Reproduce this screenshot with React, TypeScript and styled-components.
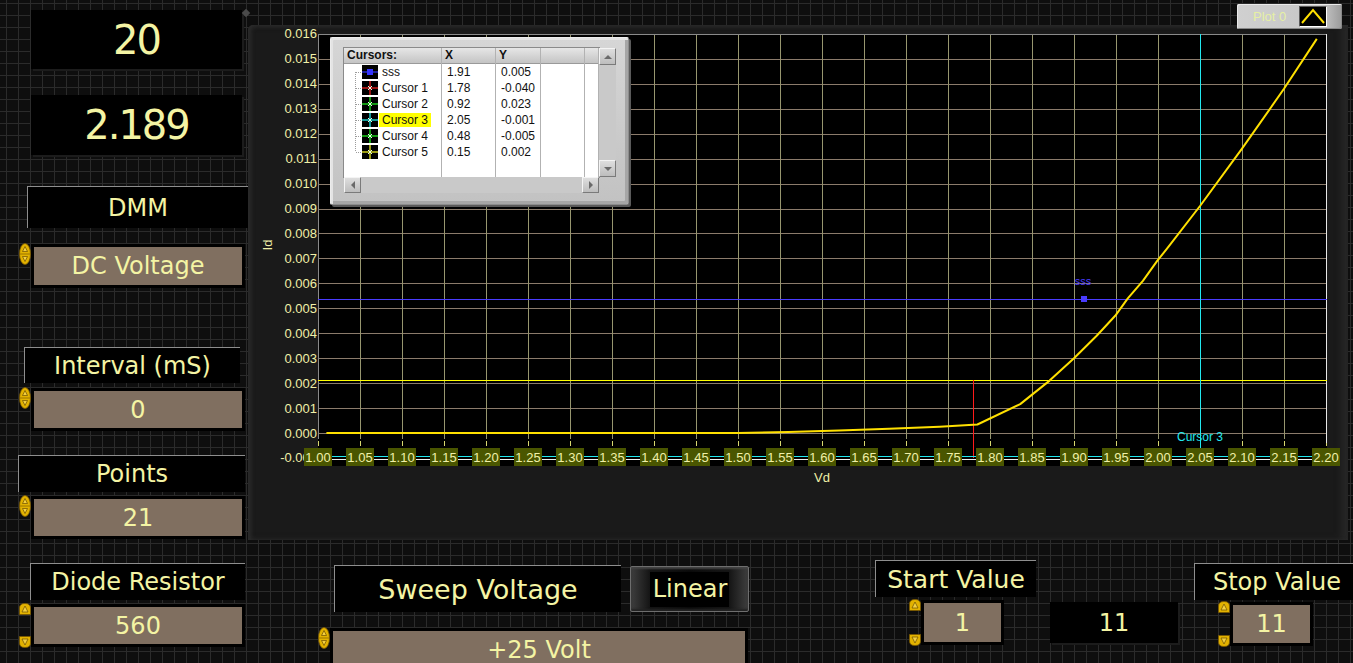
import React from 'react';
import styled, { createGlobalStyle } from 'styled-components';

const panelFont = `"Comic Sans MS", "DejaVu Sans", sans-serif`;
const uiFont = `"Liberation Sans", Arial, sans-serif`;
const ink = '#f4f4a4';

const GlobalStyle = createGlobalStyle`
  html, body { margin: 0; padding: 0; background: #0e0e0e; }
  #root { width: 1353px; height: 663px; }
`;

const FrontPanel = styled.div`
  width: 1353px;
  height: 663px;
  overflow: hidden;
  display: flex;
  background-color: #0e0e0e;
  background-image:
    linear-gradient(to right, #2b2b2b 1px, transparent 1px),
    linear-gradient(to bottom, #2b2b2b 1px, transparent 1px);
  background-size: 12px 12px;
  background-position: 6px 3px;
`;

const LeftColumn = styled.div`
  flex: none;
  width: 248px;
  display: flex;
  flex-direction: column;
  align-items: flex-start;
`;

const MainColumn = styled.div`
  flex: 1;
  min-width: 0;
  display: flex;
  flex-direction: column;
`;

type BoxProps = { $x?: number; $y?: number; $w: number; $h: number; $size?: number };

const Indicator = styled.div<BoxProps>`
  flex: none;
  margin: ${p => p.$y ?? 0}px 0 0 ${p => p.$x ?? 0}px;
  width: ${p => p.$w}px;
  height: ${p => p.$h}px;
  background: #000;
  box-shadow: 2px 2px 0 #1c1c1c;
  display: flex;
  align-items: center;
  justify-content: center;
  font-family: ${panelFont};
  font-size: ${p => p.$size ?? 24}px;
  letter-spacing: ${p => ((p.$size ?? 24) > 30 ? -2 : 0)}px;
  color: ${ink};
`;

const Caption = styled.div<BoxProps>`
  flex: none;
  box-sizing: border-box;
  margin: ${p => p.$y ?? 0}px 0 0 ${p => p.$x ?? 0}px;
  width: ${p => p.$w}px;
  height: ${p => p.$h}px;
  background: #000;
  border-top: 1px solid #8e8e8e;
  border-left: 1px solid #8e8e8e;
  display: flex;
  align-items: center;
  justify-content: center;
  white-space: nowrap;
  font-family: ${panelFont};
  font-size: ${p => p.$size ?? 24}px;
  color: ${ink};
`;

const ControlRow = styled.div<{ $x?: number; $y?: number }>`
  flex: none;
  margin: ${p => p.$y ?? 0}px 0 0 ${p => p.$x ?? 0}px;
  display: flex;
  align-items: flex-start;
  gap: 3px;
`;

const Field = styled.div<{ $w: number; $h: number }>`
  flex: none;
  width: ${p => p.$w}px;
  height: ${p => p.$h}px;
  background: #806f60;
  box-shadow: 0 0 0 3px #000;
  display: flex;
  align-items: center;
  justify-content: center;
  white-space: nowrap;
  font-family: ${panelFont};
  font-size: 24px;
  color: ${ink};
`;

const SpinnerSvg = styled.svg`
  flex: none;
  margin-top: -4px;
`;

function Spinner({ split, fieldHeight = 37 }: { split?: boolean; fieldHeight?: number }) {
  if (!split) {
    return (
      <SpinnerSvg width={12} height={22} viewBox="0 0 12 22">
        <ellipse cx={6} cy={11} rx={5.5} ry={10.5} fill="#e2b200" stroke="#7a5800" strokeWidth={0.8} />
        <line x1={1} y1={11} x2={11} y2={11} stroke="#8a6600" strokeWidth={0.8} />
        <path d="M6 3.5 L8.5 8.5 L3.5 8.5 Z" fill="#f3d040" stroke="#6b4e00" strokeWidth={0.7} />
        <path d="M6 18.5 L8.5 13.5 L3.5 13.5 Z" fill="#f3d040" stroke="#6b4e00" strokeWidth={0.7} />
      </SpinnerSvg>
    );
  }
  const h = fieldHeight + 8;
  return (
    <SpinnerSvg width={12} height={h} viewBox={`0 0 12 ${h}`}>
      <path d="M0.5 11.5 L0.5 5 Q0.5 0.5 6 0.5 Q11.5 0.5 11.5 5 L11.5 11.5 Z" fill="#e2b200" stroke="#7a5800" strokeWidth={0.8} />
      <path d="M6 3 L9 9 L3 9 Z" fill="#f3d040" stroke="#6b4e00" strokeWidth={0.7} />
      <path
        d={`M0.5 ${h - 11.5} L0.5 ${h - 5} Q0.5 ${h - 0.5} 6 ${h - 0.5} Q11.5 ${h - 0.5} 11.5 ${h - 5} L11.5 ${h - 11.5} Z`}
        fill="#e2b200"
        stroke="#7a5800"
        strokeWidth={0.8}
      />
      <path d={`M6 ${h - 3} L9 ${h - 9} L3 ${h - 9} Z`} fill="#f3d040" stroke="#6b4e00" strokeWidth={0.7} />
    </SpinnerSvg>
  );
}

/* ---------- chart ---------- */

const ChartPanel = styled.div`
  position: relative;
  flex: none;
  margin-top: 25px;
  width: 1100px;
  height: 515px;
  background: #1a1a1a;
  border-radius: 5px 0 0 0;
  box-shadow: inset 3px 1px 4px #2c2c2c, inset -7px 0 6px #262626;
`;

const Handle = styled.div`
  position: absolute;
  left: -5px;
  top: -15px;
  width: 6px;
  height: 6px;
  background: #4a4a4a;
  transform: rotate(45deg);
`;

const ChartSvg = styled.svg`
  display: block;
`;

const X0 = 70;
const X1 = 1079;
const Y0 = 9;
const px = (v: number) => X0 + (v - 1) * 840;
const py = (id: number) => 408 - id * 24940;
const crisp = (n: number) => Math.round(n) + 0.5;

const trace: [number, number][] = [
  [1.01, 0], [1.5, 0], [1.56, 0.00004], [1.62, 0.0001], [1.68, 0.00017], [1.74, 0.00025],
  [1.785, 0.00034], [1.836, 0.00116], [1.871, 0.0021], [1.9, 0.003], [1.927, 0.0039],
  [1.949, 0.0047], [1.964, 0.0054], [1.982, 0.0061], [1.999, 0.0069], [2.011, 0.0074],
  [2.05, 0.0091], [2.1, 0.0114], [2.15, 0.0138], [2.189, 0.0158],
];

const axisInk = '#f0f0a8';

function Chart() {
  const yTicks = Array.from({ length: 18 }, (_, i) => 16 - i);
  const xTicks = Array.from({ length: 25 }, (_, i) => i);
  return (
    <ChartSvg width={1100} height={515} viewBox="0 0 1100 515">
      <rect x={X0} y={Y0} width={X1 - X0} height={432} fill="#000" />
      {yTicks
        .filter(k => k >= 0 && k < 16)
        .map(k => (
          <line key={`h${k}`} x1={X0} x2={X1} y1={crisp(py(k / 1000))} y2={crisp(py(k / 1000))} stroke="#8b7b6b" />
        ))}
      {xTicks
        .filter(i => i > 0 && i < 24)
        .map(i => (
          <line key={`v${i}`} x1={crisp(px(1 + i * 0.05))} x2={crisp(px(1 + i * 0.05))} y1={Y0} y2={414} stroke="#97966f" />
        ))}
      {xTicks.map(i => (
        <line key={`t${i}`} x1={crisp(px(1 + i * 0.05))} x2={crisp(px(1 + i * 0.05))} y1={416} y2={421} stroke="#d8d870" />
      ))}
      <line x1={X0} x2={X1} y1={Y0 + 0.5} y2={Y0 + 0.5} stroke="#8a8a8a" />
      <line x1={X0 + 0.5} x2={X0 + 0.5} y1={Y0} y2={414} stroke="#8a8a8a" />
      <line x1={X1 - 0.5} x2={X1 - 0.5} y1={Y0} y2={418} stroke="#e8e8e8" />

      {/* cursors */}
      <line x1={X0} x2={X1} y1={355.5} y2={355.5} stroke="#ffff00" />
      <line x1={X0} x2={X1} y1={274.5} y2={274.5} stroke="#4a3cff" />
      <line x1={725.5} x2={725.5} y1={355} y2={433} stroke="#ff1a1a" />
      <line x1={952.5} x2={952.5} y1={Y0} y2={433} stroke="#22e8f0" />
      <rect x={833} y={271} width={6} height={6} fill="#4a3cff" />
      <text x={835} y={260} fill="#4a3cff" fontSize={11} fontFamily={uiFont} textAnchor="middle">sss</text>
      <text x={952} y={416} fill="#22e8f0" fontSize={12} fontFamily={uiFont} textAnchor="middle">Cursor 3</text>

      <polyline
        points={trace.map(([v, id]) => `${px(v).toFixed(1)},${py(id).toFixed(1)}`).join(' ')}
        fill="none"
        stroke="#ffe000"
        strokeWidth={2}
        strokeLinejoin="round"
      />

      <line x1={X0} x2={X1} y1={431.5} y2={431.5} stroke="#22e8f0" />
      <line x1={X0} x2={X1} y1={434.5} y2={434.5} stroke="#f0f0f0" />

      {yTicks.map(k => (
        <text
          key={`yl${k}`}
          x={69}
          y={py(k / 1000) + 4.5}
          fill={axisInk}
          fontSize={13}
          fontFamily={uiFont}
          textAnchor="end"
        >
          {(k / 1000).toFixed(3)}
        </text>
      ))}
      {xTicks.map(i => (
        <g key={`xl${i}`}>
          <rect x={px(1 + i * 0.05) - 14} y={423} width={28} height={18} fill="#4a5600" />
          <text x={px(1 + i * 0.05)} y={437} fill={axisInk} fontSize={13} fontFamily={uiFont} textAnchor="middle">
            {(1 + i * 0.05).toFixed(2)}
          </text>
        </g>
      ))}
      <text x={574} y={457} fill={axisInk} fontSize={13} fontFamily={uiFont} textAnchor="middle">Vd</text>
      <text
        x={20}
        y={224}
        transform="rotate(-90 20 220)"
        fill={axisInk}
        fontSize={13}
        fontFamily={uiFont}
        textAnchor="middle"
      >
        Id
      </text>
    </ChartSvg>
  );
}

/* ---------- cursor legend ---------- */

const CursorLegend = styled.div`
  position: absolute;
  left: 82px;
  top: 12px;
  width: 299px;
  height: 168px;
  box-sizing: border-box;
  padding: 10px 12px 10px 13px;
  background: linear-gradient(#d6d6d6, #c2c2c2);
  border: 1px solid #8c8c8c;
  border-top-color: #ececec;
  border-left-color: #ececec;
  border-radius: 2px;
  box-shadow: inset 2px 2px 0 #e4e4e4, inset -3px -3px 0 #a6a6a6, 2px 2px 0 #5a5a5a;
  display: grid;
  grid-template-columns: 255px 17px;
  grid-template-rows: 129px 16px;
  font-family: ${uiFont};
  font-size: 12px;
  color: #111;
`;

const TableArea = styled.div`
  display: flex;
  background: #fff;
  outline: 1px solid #8a8a8a;
  overflow: hidden;
`;

const Column = styled.div<{ $w?: number }>`
  box-sizing: border-box;
  width: ${p => (p.$w ? `${p.$w}px` : 'auto')};
  flex: ${p => (p.$w ? 'none' : 1)};
  border-right: 1px solid #b2b2b2;
  display: flex;
  flex-direction: column;
`;

const HeadCell = styled.div`
  height: 16px;
  box-sizing: border-box;
  padding-left: 3px;
  line-height: 15px;
  font-weight: bold;
  background: linear-gradient(#e6e6e6, #c4c4c4);
  border-bottom: 1px solid #9a9a9a;
  white-space: nowrap;
`;

const Cell = styled.div<{ $pad?: number }>`
  height: 16px;
  display: flex;
  align-items: center;
  padding-left: ${p => p.$pad ?? 5}px;
  white-space: nowrap;
`;

const NameTag = styled.span<{ $active?: boolean }>`
  margin-left: -1px;
  padding: 0 3px;
  line-height: 14px;
  background: ${p => (p.$active ? '#ffff00' : 'transparent')};
`;

const VScroll = styled.div`
  grid-column: 2;
  grid-row: 1;
  display: flex;
  flex-direction: column;
  justify-content: space-between;
  background: #c9c9c9;
`;

const HScroll = styled.div`
  grid-column: 1;
  grid-row: 2;
  display: flex;
  justify-content: space-between;
  background: #c9c9c9;
`;

const ScrollButton = styled.div<{ $h?: number }>`
  width: 17px;
  height: ${p => p.$h ?? 17}px;
  box-sizing: border-box;
  background: linear-gradient(#dedede, #bdbdbd);
  border: 1px solid;
  border-color: #f4f4f4 #7a7a7a #7a7a7a #f4f4f4;
  display: flex;
  align-items: center;
  justify-content: center;
`;

type Dir = 'up' | 'down' | 'left' | 'right';

const Arrow = styled.span<{ $dir: Dir }>`
  width: 0;
  height: 0;
  border: 4px solid transparent;
  ${p =>
    p.$dir === 'up'
      ? 'border-bottom-color: #6a6a6a; margin-top: -4px;'
      : p.$dir === 'down'
      ? 'border-top-color: #6a6a6a; margin-top: 4px;'
      : p.$dir === 'left'
      ? 'border-right-color: #6a6a6a; margin-left: -4px;'
      : 'border-left-color: #6a6a6a; margin-left: 4px;'}
`;

type CursorRow = { name: string; x: string; y: string; color: string; point?: boolean; active?: boolean };

const cursors: CursorRow[] = [
  { name: 'sss', x: '1.91', y: '0.005', color: '#3434ff', point: true },
  { name: 'Cursor 1', x: '1.78', y: '-0.040', color: '#ff2020' },
  { name: 'Cursor 2', x: '0.92', y: '0.023', color: '#22ff22' },
  { name: 'Cursor 3', x: '2.05', y: '-0.001', color: '#22ffff', active: true },
  { name: 'Cursor 4', x: '0.48', y: '-0.005', color: '#22ff22' },
  { name: 'Cursor 5', x: '0.15', y: '0.002', color: '#ffff22' },
];

function BranchIcon({ row, index, last }: { row: CursorRow; index: number; last: boolean }) {
  const top = index === 0 ? 8 : 0;
  const bottom = last ? 8 : 16;
  return (
    <svg width={36} height={16} viewBox="0 0 36 16" style={{ flex: 'none' }}>
      <line x1={11.5} x2={11.5} y1={top} y2={bottom} stroke="#9c9c9c" strokeDasharray="1 1" />
      <line x1={12} x2={18} y1={8.5} y2={8.5} stroke="#9c9c9c" strokeDasharray="1 1" />
      <rect x={18} y={1} width={16} height={14} fill="#000" />
      <line x1={18} x2={34} y1={8} y2={8} stroke={row.color} strokeWidth={1.2} />
      {row.point ? (
        <rect x={23} y={5} width={6} height={6} fill={row.color} />
      ) : (
        <>
          <line x1={26} x2={26} y1={1} y2={15} stroke={row.color} strokeWidth={1.2} />
          <path d="M24 6 L28 10 M28 6 L24 10" stroke="#e8ffe8" strokeWidth={1} />
        </>
      )}
    </svg>
  );
}

function Legend() {
  return (
    <CursorLegend>
      <TableArea>
        <Column $w={98}>
          <HeadCell>Cursors:</HeadCell>
          {cursors.map((c, i) => (
            <Cell key={c.name} $pad={0}>
              <BranchIcon row={c} index={i} last={i === cursors.length - 1} />
              <NameTag $active={c.active}>{c.name}</NameTag>
            </Cell>
          ))}
        </Column>
        <Column $w={54}>
          <HeadCell>X</HeadCell>
          {cursors.map(c => (
            <Cell key={c.name}>{c.x}</Cell>
          ))}
        </Column>
        <Column $w={45}>
          <HeadCell>Y</HeadCell>
          {cursors.map(c => (
            <Cell key={c.name}>{c.y}</Cell>
          ))}
        </Column>
        <Column $w={44}>
          <HeadCell />
        </Column>
        <Column>
          <HeadCell />
        </Column>
      </TableArea>
      <VScroll>
        <ScrollButton>
          <Arrow $dir="up" />
        </ScrollButton>
        <ScrollButton>
          <Arrow $dir="down" />
        </ScrollButton>
      </VScroll>
      <HScroll>
        <ScrollButton $h={16}>
          <Arrow $dir="left" />
        </ScrollButton>
        <ScrollButton $h={16}>
          <Arrow $dir="right" />
        </ScrollButton>
      </HScroll>
    </CursorLegend>
  );
}

const PlotLegend = styled.div`
  position: absolute;
  left: 989px;
  top: -21px;
  width: 105px;
  height: 25px;
  box-sizing: border-box;
  padding-left: 16px;
  display: flex;
  align-items: center;
  gap: 13px;
  background: linear-gradient(to right, #d0d0d0 0%, #c6c6c6 82%, #9a9a9a 100%);
  border-radius: 2px;
  box-shadow: inset 1px 1px 0 #eaeaea, inset -1px -1px 0 #888;
  font-family: ${uiFont};
  font-size: 13px;
  color: #e6f0a4;
`;

const Swatch = styled.div`
  width: 28px;
  height: 21px;
  box-sizing: border-box;
  background: #000;
  border: 1px solid;
  border-color: #5a5a5a #ffffff #ffffff #5a5a5a;
`;

/* ---------- bottom controls ---------- */

const BottomRow = styled.div`
  flex: none;
  display: flex;
  align-items: flex-start;
`;

const Group = styled.div<{ $x: number; $y: number }>`
  flex: none;
  margin: ${p => p.$y}px 0 0 ${p => p.$x}px;
  display: flex;
  flex-direction: column;
`;

const SweepTop = styled.div`
  display: flex;
  align-items: flex-start;
  gap: 9px;
  padding-left: 16px;
`;

const ModeButton = styled.div`
  flex: none;
  margin-top: 1px;
  width: 119px;
  height: 46px;
  box-sizing: border-box;
  border: 1px solid #6e6e6e;
  border-radius: 2px;
  background: linear-gradient(to right, #3e3e3e, #151515 16%, #0a0a0a 50%, #151515 84%, #3e3e3e);
  box-shadow: inset 0 2px 2px #454545, inset 0 -2px 2px #222;
  display: flex;
  align-items: center;
  justify-content: center;
`;

const ModeText = styled.span`
  background: #000;
  padding: 3px 2px 4px 3px;
  font-family: ${panelFont};
  font-size: 24px;
  color: ${ink};
`;

export default function App() {
  return (
    <>
      <GlobalStyle />
      <FrontPanel>
        <LeftColumn>
          <Indicator $x={31} $y={10} $w={211} $h={59} $size={40}>20</Indicator>
          <Indicator $x={31} $y={26} $w={211} $h={60} $size={40}>2.189</Indicator>
          <Caption $x={27} $y={31} $w={221} $h={42}>DMM</Caption>
          <ControlRow $x={19} $y={19}>
            <Spinner />
            <Field $w={208} $h={38}>DC Voltage</Field>
          </ControlRow>
          <Caption $x={24} $y={62} $w={216} $h={36}>Interval (mS)</Caption>
          <ControlRow $x={19} $y={8}>
            <Spinner />
            <Field $w={208} $h={37}>0</Field>
          </ControlRow>
          <Caption $x={18} $y={27} $w={227} $h={37}>Points</Caption>
          <ControlRow $x={19} $y={7}>
            <Spinner />
            <Field $w={208} $h={37}>21</Field>
          </ControlRow>
          <Caption $x={30} $y={27} $w={215} $h={37}>Diode Resistor</Caption>
          <ControlRow $x={19} $y={7}>
            <Spinner split fieldHeight={37} />
            <Field $w={208} $h={37}>560</Field>
          </ControlRow>
        </LeftColumn>

        <MainColumn>
          <ChartPanel>
            <Handle />
            <Chart />
            <Legend />
            <PlotLegend>
              Plot 0
              <Swatch>
                <svg width={26} height={19} viewBox="0 0 26 19">
                  <polyline points="2,16 13,3 24,16" fill="none" stroke="#ffe000" strokeWidth={2} />
                </svg>
              </Swatch>
            </PlotLegend>
          </ChartPanel>

          <BottomRow>
            <Group $x={70} $y={25}>
              <SweepTop>
                <Caption $w={287} $h={47} $size={27}>Sweep Voltage</Caption>
                <ModeButton>
                  <ModeText>Linear</ModeText>
                </ModeButton>
              </SweepTop>
              <ControlRow $y={19}>
                <Spinner />
                <Field $w={412} $h={38}>+25 Volt</Field>
              </ControlRow>
            </Group>

            <Group $x={126} $y={20}>
              <Caption $w={161} $h={37} $size={25}>Start Value</Caption>
              <ControlRow $x={34} $y={6}>
                <Spinner split fieldHeight={39} />
                <Field $w={77} $h={39}>1</Field>
              </ControlRow>
            </Group>

            <Indicator $x={14} $y={62} $w={128} $h={41}>11</Indicator>

            <Group $x={16} $y={23}>
              <Caption $w={165} $h={37}>Stop Value</Caption>
              <ControlRow $x={24} $y={5}>
                <Spinner split fieldHeight={38} />
                <Field $w={77} $h={38}>11</Field>
              </ControlRow>
            </Group>
          </BottomRow>
        </MainColumn>
      </FrontPanel>
    </>
  );
}
